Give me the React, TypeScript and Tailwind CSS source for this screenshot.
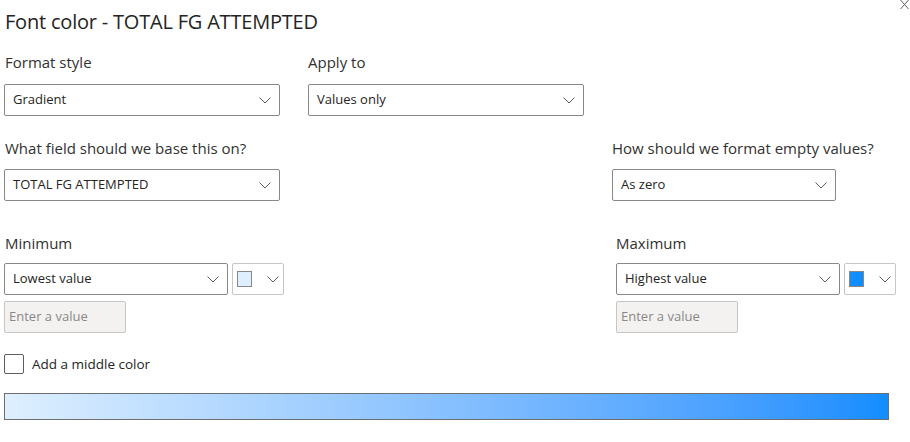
import React from 'react';

function Chevron() {
  return (
    <svg width="12" height="7" viewBox="0 0 12 7" className="shrink-0">
      <path d="M0.5 0.5 L6 6 L11.5 0.5" fill="none" stroke="#605e5c" strokeWidth="1" />
    </svg>
  );
}

function Dropdown({ value, className }: { value: string; className: string }) {
  return (
    <div
      className={`flex items-center justify-between h-8 border border-[#8a8886] rounded-[2px] bg-white pl-2 pr-2 text-[13px] text-[#252423] ${className}`}
    >
      <span>{value}</span>
      <Chevron />
    </div>
  );
}

function ColorPick({ color }: { color: string }) {
  return (
    <div className="flex items-center gap-[15px] h-8 w-[52px] border border-[#c8c6c4] rounded-[2px] pl-[4px]">
      <div className="w-[15px] h-[16px] border border-[#8a8886]" style={{ backgroundColor: color }} />
      <Chevron />
    </div>
  );
}

function ValueBox() {
  return (
    <div className="mt-[6px] flex items-center h-8 w-[122px] border border-[#c8c6c4] bg-[#f3f2f1] rounded-[2px] pl-[4px] text-[13px] text-[#8a8886]">
      Enter a value
    </div>
  );
}

export default function App() {
  return (
    <div className="relative w-[910px] h-[442px] bg-white overflow-hidden font-['Open_Sans',sans-serif] text-[#252423]">
      {/* close */}
      <svg className="absolute right-[1px] top-0" width="9" height="10" viewBox="0 0 9 10">
        <path d="M0.5 0 L8.5 9 M8.5 0 L0.5 9" stroke="#605e5c" strokeWidth="1" />
      </svg>

      <div className="pl-[4px]">
        <h1 className="pt-[10px] pl-[1px] text-[20px] leading-[24px] font-normal tracking-[-0.2px]">
          Font color - TOTAL FG ATTEMPTED
        </h1>

        <div className="flex mt-[18px]">
          <div className="w-[304px]">
            <div className="pl-[1px] text-[15px] leading-[20px] text-[#323130]">Format style</div>
            <Dropdown value="Gradient" className="mt-[12px] w-[276px]" />
          </div>
          <div>
            <div className="text-[15px] leading-[20px] text-[#323130]">Apply to</div>
            <Dropdown value="Values only" className="mt-[12px] w-[276px]" />
          </div>
        </div>

        <div className="flex mt-[22px]">
          <div className="w-[608px]">
            <div className="pl-[1px] text-[15px] leading-[20px] text-[#323130]">What field should we base this on?</div>
            <Dropdown value="TOTAL FG ATTEMPTED" className="mt-[11px] w-[276px]" />
          </div>
          <div>
            <div className="text-[15px] leading-[20px] text-[#323130]">How should we format empty values?</div>
            <Dropdown value="As zero" className="mt-[11px] w-[224px]" />
          </div>
        </div>

        <div className="flex mt-[32px]">
          <div className="w-[612px]">
            <div className="pl-[1px] text-[15px] leading-[20px] text-[#323130]">Minimum</div>
            <div className="flex gap-[4px] mt-[10px]">
              <Dropdown value="Lowest value" className="w-[224px]" />
              <ColorPick color="#deefff" />
            </div>
            <ValueBox />
          </div>
          <div>
            <div className="text-[15px] leading-[20px] text-[#323130]">Maximum</div>
            <div className="flex gap-[4px] mt-[10px]">
              <Dropdown value="Highest value" className="w-[224px]" />
              <ColorPick color="#118dff" />
            </div>
            <ValueBox />
          </div>
        </div>

        <label className="flex items-center gap-[8px] mt-[21px] text-[13.5px] text-[#252423]">
          <span className="w-[20px] h-[20px] border border-[#605e5c] rounded-[2px] bg-white" />
          Add a middle color
        </label>

        <div className="mt-[19px] w-[885px] h-[27px] border border-[#6e6e6e] bg-gradient-to-r from-[#deefff] to-[#118dff]" />
      </div>
    </div>
  );
}
